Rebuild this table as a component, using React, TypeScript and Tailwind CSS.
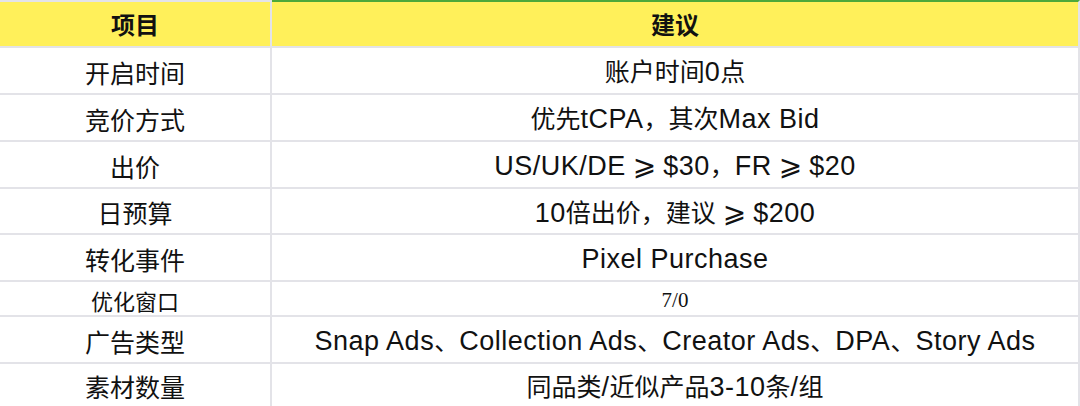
import React from "react";

type Row = { item: string; value: string; h: string; small?: boolean };

const rows: Row[] = [
  { item: "开启时间", value: "账户时间0点", h: "h-[45px]" },
  { item: "竞价方式", value: "优先tCPA，其次Max Bid", h: "h-[45px]" },
  { item: "出价", value: "US/UK/DE ⩾ $30，FR ⩾ $20", h: "h-[45px]" },
  { item: "日预算", value: "10倍出价，建议 ⩾ $200", h: "h-[44px]" },
  { item: "转化事件", value: "Pixel Purchase", h: "h-[45px]" },
  { item: "优化窗口", value: "7/0", h: "h-[33px]", small: true },
  { item: "广告类型", value: "Snap Ads、Collection Ads、Creator Ads、DPA、Story Ads", h: "h-[45px]" },
  { item: "素材数量", value: "同品类/近似产品3-10条/组", h: "h-[42px]" },
];

const CJK = /[\u3000-\u303f\u4e00-\u9fff\uff00-\uffef]/;

// CJK runs get a slightly smaller size than latin runs, like PingFang does
function Mixed({ text }: { text: string }) {
  const parts = text.split(/([\u3000-\u303f\u4e00-\u9fff\uff00-\uffef]+|⩾)/);
  return (
    <span className="font-['Liberation_Sans','Noto_Sans_CJK_SC',sans-serif] text-[27px]">
      {parts.map((p, i) =>
        p === "⩾" ? (
          <span key={i} className="font-['DejaVu_Sans',sans-serif] text-[28px] mx-[-1px]">
            {p}
          </span>
        ) : CJK.test(p) ? (
          <span key={i} className="font-['Noto_Sans_CJK_SC',sans-serif] text-[25px]">
            {p}
          </span>
        ) : (
          <span key={i} className="tracking-[0.5px]">
            {p}
          </span>
        )
      )}
    </span>
  );
}

export default function App() {
  return (
    <div className="w-[1080px] h-[406px] overflow-hidden bg-white text-[#111] font-['Noto_Sans_CJK_SC',sans-serif]">
      <div className="flex border-b-2 border-[#e3e3e8]">
        <div className="w-[272px] shrink-0 border-t-2 border-r-2 border-t-[#e3e3e8] border-r-[#e3e3e8] bg-[#fff05a] h-[46px] flex items-center justify-center text-[24px] font-bold">
          项目
        </div>
        <div className="flex-1 border-t-2 border-r-2 border-t-[#4ea83a] border-r-[#e3e3e8] bg-[#fff05a] h-[46px] flex items-center justify-center text-[24px] font-bold">
          建议
        </div>
      </div>
      {rows.map((r) => (
        <div key={r.item} className="flex border-b-2 border-[#e3e3e8]">
          <div
            className={`w-[272px] shrink-0 border-r-2 border-[#e3e3e8] flex items-center justify-center pt-[3px] ${r.h} ${
              r.small ? "text-[22px]" : "text-[25px]"
            } leading-none`}
          >
            {r.item}
          </div>
          <div className={`flex-1 border-r-2 border-[#e3e3e8] flex items-center justify-center pt-[3px] leading-none ${r.h}`}>
            {r.small ? (
              <span className="font-['Liberation_Serif',serif] text-[21px]">{r.value}</span>
            ) : (
              <Mixed text={r.value} />
            )}
          </div>
        </div>
      ))}
    </div>
  );
}
